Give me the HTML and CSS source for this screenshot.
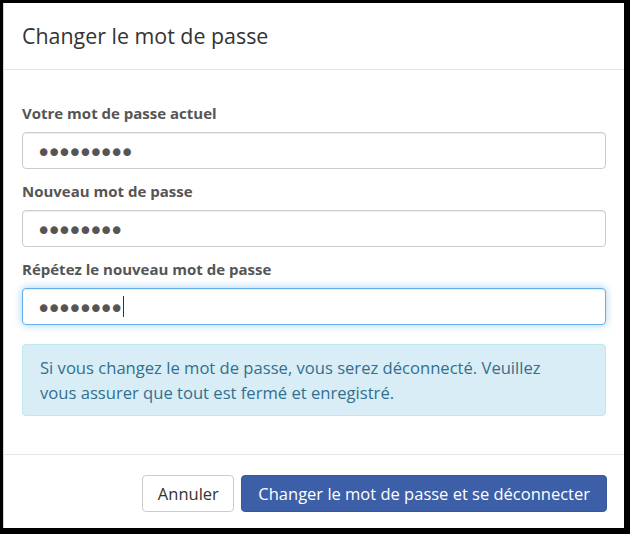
FILE: index.html
```html
<!DOCTYPE html>
<html lang="fr">
<head>
<meta charset="utf-8">
<title>Changer le mot de passe</title>
<link rel="stylesheet" href="styles.css">
</head>
<body>
<div class="modal">
  <div class="modal-header">
    <h4 class="modal-title">Changer le mot de passe</h4>
  </div>
  <div class="modal-body">
    <div class="form-group">
      <label class="control-label" for="pw-current">Votre mot de passe actuel</label>
      <input class="form-control" id="pw-current" type="password" value="123456789">
    </div>
    <div class="form-group">
      <label class="control-label" for="pw-new">Nouveau mot de passe</label>
      <input class="form-control" id="pw-new" type="password" value="12345678">
    </div>
    <div class="form-group">
      <label class="control-label" for="pw-repeat">Répétez le nouveau mot de passe</label>
      <div class="input-wrap">
        <input class="form-control is-focus" id="pw-repeat" type="password" value="12345678">
        <span class="caret"></span>
      </div>
    </div>
    <div class="alert alert-info">Si vous changez le mot de passe, vous serez déconnecté. Veuillez<br>vous assurer que tout est fermé et enregistré.</div>
  </div>
  <div class="modal-footer">
    <button class="btn btn-default" type="button">Annuler</button>
    <button class="btn btn-primary" type="button">Changer le mot de passe et se déconnecter</button>
  </div>
</div>
</body>
</html>
```
FILE: styles.css
```css
html, body {
  margin: 0;
  padding: 0;
  background: #000;
}
body {
  padding: 3px 6px 6px 3px;
  font-family: "Open Sans", "Liberation Sans", sans-serif;
  color: #333;
}
.modal {
  width: 621px;
  height: 525px;
  box-sizing: border-box;
  background: #fff;
  border-left: 1px solid #d6d6d6;
  display: flex;
  flex-direction: column;
}
.modal-header {
  padding: 18px 18px;
  border-bottom: 1px solid #e5e5e5;
}
.modal-title {
  margin: 0;
  font-size: 21.4px;
  line-height: 30px;
  font-weight: 400;
  color: #333;
}
.modal-body {
  padding: 33px 18px 0 18px;
  flex: 1;
  display: flex;
  flex-direction: column;
}
.form-group {
  display: flex;
  flex-direction: column;
  margin-bottom: 12px;
}
.control-label {
  font-size: 15px;
  line-height: 21px;
  font-weight: 700;
  color: #555;
  margin-bottom: 8px;
}
.input-wrap {
  position: relative;
}
.form-control {
  box-sizing: border-box;
  display: block;
  height: 37px;
  width: 100%;
  margin: 0;
  padding: 4px 0 0 13px;
  font-family: "DejaVu Sans", sans-serif;
  font-size: 26px;
  letter-spacing: -4.9px;
  color: #555;
  background: #fff;
  border: 1px solid #ccc;
  border-radius: 4px;
  box-shadow: inset 0 1px 1px rgba(0,0,0,.075);
  outline: none;
}
.form-control.is-focus {
  border-color: #66afe9;
  box-shadow: inset 0 1px 1px rgba(0,0,0,.075), 0 0 8px rgba(102,175,233,.6);
}
.caret {
  position: absolute;
  left: 101px;
  top: 8px;
  width: 1px;
  height: 21px;
  background: #333;
}
.alert {
  margin-top: 7px;
  padding: 10px 17px;
  font-size: 16.6px;
  line-height: 25px;
  border: 1px solid #bce8f1;
  border-radius: 4px;
  background: #d9edf7;
  color: #31708f;
}
.modal-footer {
  border-top: 1px solid #e5e5e5;
  height: 74px;
  box-sizing: border-box;
  padding: 20px 17px 0 18px;
  display: flex;
  justify-content: flex-end;
  align-items: flex-start;
  gap: 7px;
}
.btn {
  box-sizing: border-box;
  height: 37px;
  padding: 0 16px;
  font-family: "Open Sans", "Liberation Sans", sans-serif;
  font-size: 16.5px;
  line-height: 35px;
  border-radius: 4px;
  border: 1px solid transparent;
  cursor: pointer;
}
.btn-default {
  padding: 0 14.5px;
  background: #fff;
  border-color: #ccc;
  color: #333;
}
.btn-primary {
  background: #3d5fa8;
  border-color: #375797;
  color: #fff;
}
```
